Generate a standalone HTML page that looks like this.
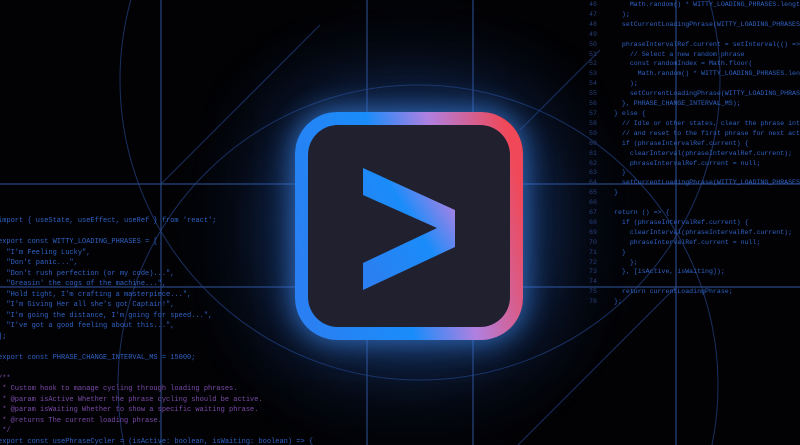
<!DOCTYPE html>
<html><head><meta charset="utf-8"><style>
html,body{margin:0;padding:0;background:#020204;width:800px;height:445px;overflow:hidden;position:relative;font-family:"Liberation Mono",monospace}
.code{position:absolute;white-space:pre;color:#2f62c4;overflow:hidden}
.c{color:#7a4aa8}
.n{color:#2a3f78;display:inline-block;width:25px}
svg{position:absolute;left:0;top:0}
</style></head><body>
<div style="position:absolute;left:160px;top:-20px;width:500px;height:500px;border-radius:50%;background:radial-gradient(circle,rgba(50,110,200,0.45) 0%,rgba(35,80,150,0.28) 30%,rgba(20,40,80,0.12) 50%,rgba(0,0,0,0) 68%)"></div>
<svg width="800" height="445">
 <g stroke="#1a3060" stroke-width="1" fill="none">
  <circle cx="420" cy="80" r="300"/>
  <circle cx="418" cy="385" r="300"/>
  <line x1="161" y1="184" x2="320" y2="25"/>
  <line x1="676" y1="287" x2="518" y2="445"/>
  <line x1="520" y1="130" x2="600" y2="50"/>
 </g>
 <g stroke="#284682" stroke-width="1.2">
  <line x1="161" y1="0" x2="161" y2="445"/>
  <line x1="676" y1="0" x2="676" y2="445"/>
  <line x1="0" y1="184" x2="800" y2="184"/>
  <line x1="0" y1="287" x2="800" y2="287"/>
  <line x1="367" y1="0" x2="367" y2="445"/>
  <line x1="473" y1="0" x2="473" y2="445"/>
 </g>
</svg>
<div class="code" style="left:-2px;top:216px;font-size:7px;line-height:10.5px;width:420px">import { useState, useEffect, useRef } from 'react';

export const WITTY_LOADING_PHRASES = [
  "I'm Feeling Lucky",
  "Don't panic...",
  "Don't rush perfection (or my code)...",
  "Greasin' the cogs of the machine...",
  "Hold tight, I'm crafting a masterpiece...",
  "I'm Giving Her all she's got Captain!",
  "I'm going the distance, I'm going for speed...",
  "I've got a good feeling about this...",
];

export const PHRASE_CHANGE_INTERVAL_MS = 15000;

<span class="c">/**
 * Custom hook to manage cycling through loading phrases.
 * @param isActive Whether the phrase cycling should be active.
 * @param isWaiting Whether to show a specific waiting phrase.
 * @returns The current loading phrase.
 */</span>
export const usePhraseCycler = (isActive: boolean, isWaiting: boolean) => {</div>
<div class="code" style="left:589px;top:0px;line-height:9.9px;font-size:6.6px;width:211px;height:445px"><span class="n">46</span>    Math.random() * WITTY_LOADING_PHRASES.length
<span class="n">47</span>  );
<span class="n">48</span>  setCurrentLoadingPhrase(WITTY_LOADING_PHRASES
<span class="n">49</span>
<span class="n">50</span>  phraseIntervalRef.current = setInterval(() =>
<span class="n">51</span>    // Select a new random phrase
<span class="n">52</span>    const randomIndex = Math.floor(
<span class="n">53</span>      Math.random() * WITTY_LOADING_PHRASES.len
<span class="n">54</span>    );
<span class="n">55</span>    setCurrentLoadingPhrase(WITTY_LOADING_PHRAS
<span class="n">56</span>  }, PHRASE_CHANGE_INTERVAL_MS);
<span class="n">57</span>} else {
<span class="n">58</span>  // Idle or other states, clear the phrase int
<span class="n">59</span>  // and reset to the first phrase for next act
<span class="n">60</span>  if (phraseIntervalRef.current) {
<span class="n">61</span>    clearInterval(phraseIntervalRef.current);
<span class="n">62</span>    phraseIntervalRef.current = null;
<span class="n">63</span>  }
<span class="n">64</span>  setCurrentLoadingPhrase(WITTY_LOADING_PHRASES
<span class="n">65</span>}
<span class="n">66</span>
<span class="n">67</span>return () => {
<span class="n">68</span>  if (phraseIntervalRef.current) {
<span class="n">69</span>    clearInterval(phraseIntervalRef.current);
<span class="n">70</span>    phraseIntervalRef.current = null;
<span class="n">71</span>  }
<span class="n">72</span>    };
<span class="n">73</span>  }, [isActive, isWaiting]);
<span class="n">74</span>
<span class="n">75</span>  return currentLoadingPhrase;
<span class="n">76</span>};</div>
<div style="position:absolute;left:295px;top:112px;width:228px;height:228px;border-radius:42px;box-shadow:0 0 25px 4px rgba(70,150,255,0.55),0 0 80px 20px rgba(40,100,210,0.3)"></div>
<svg width="800" height="445">
 <defs>
  <linearGradient id="g" x1="295" y1="250" x2="523" y2="200" gradientUnits="userSpaceOnUse">
   <stop offset="0" stop-color="#2a80f2"/>
   <stop offset="0.42" stop-color="#1a8cfa"/>
   <stop offset="0.68" stop-color="#b080e0"/>
   <stop offset="1" stop-color="#f04858"/>
  </linearGradient>
  <linearGradient id="g2" x1="363" y1="260" x2="460" y2="200" gradientUnits="userSpaceOnUse">
   <stop offset="0" stop-color="#2a80f0"/>
   <stop offset="0.55" stop-color="#1a8cfa"/>
   <stop offset="1" stop-color="#c080e0"/>
  </linearGradient>
 </defs>
 <rect x="295" y="112" width="228" height="228" rx="42" fill="url(#g)"/>
 <rect x="308" y="125" width="202" height="202" rx="30" fill="#20202e"/>
 <polygon points="363,168 455,210 455,247 363,290 363,263 437,228 363,195" fill="url(#g2)"/>
</svg>
</body></html>
